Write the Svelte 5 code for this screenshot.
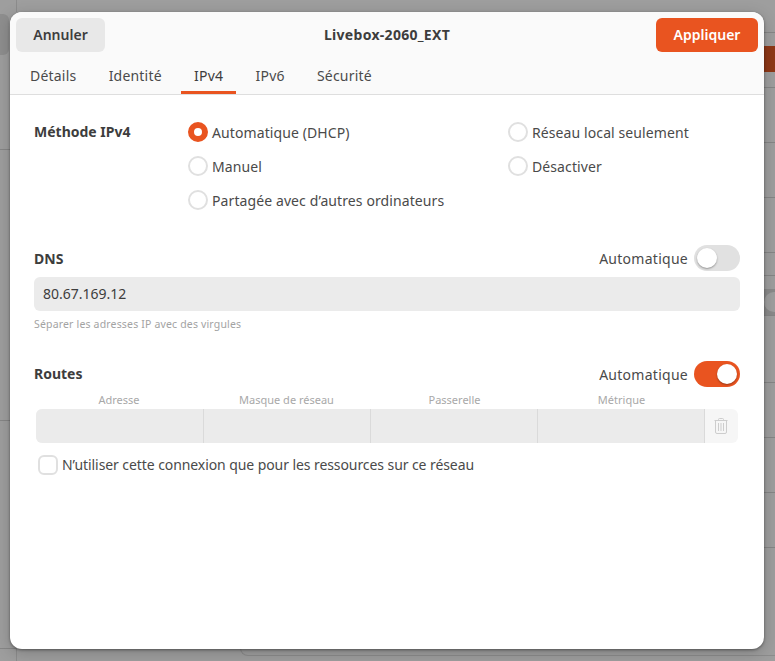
<script lang="ts">
	const columns = ['Adresse', 'Masque de réseau', 'Passerelle', 'Métrique'];
	const tabs = ['Détails', 'Identité', 'IPv4', 'IPv6', 'Sécurité'];
	// rows of the dimmed list showing at the right of the dialog
	const rightLines = [32, 87, 142, 197, 252, 275, 315, 382, 437, 492, 547, 655];
</script>

<div class="backdrop">
	<!-- window behind the dialog, dimmed -->
	<div class="behind-left"></div>
	<div class="behind-vline top-v"></div>
	<div class="behind-vline bottom-v"></div>
	<div class="behind-hline" style="top: 149px"></div>
	<div class="behind-hline" style="top: 420px"></div>
	<div class="behind-hline" style="top: 648px"></div>
	{#each rightLines as y}
		<div class="right-line" style="top: {y}px"></div>
	{/each}
	<div class="behind-btn"></div>
	<div class="behind-track"><span></span></div>
	<div class="behind-edge"></div>

	<div class="dialog">
		<header class="titlebar">
			<div class="top">
				<button class="btn cancel">Annuler</button>
				<span class="title">Livebox-2060_EXT</span>
				<button class="btn apply">Appliquer</button>
			</div>
			<nav class="tabs">
				{#each tabs as tab}
					<span class="tab" class:active={tab === 'IPv4'}>{tab}</span>
				{/each}
			</nav>
		</header>

		<main class="body">
			<section class="method">
				<span class="label method-label">Méthode IPv4</span>
				<div class="radios">
					<div class="radio-col first">
						<div class="radio"><span class="dot on"></span>Automatique (DHCP)</div>
						<div class="radio"><span class="dot"></span>Manuel</div>
						<div class="radio"><span class="dot"></span>Partagée avec d’autres ordinateurs</div>
					</div>
					<div class="radio-col">
						<div class="radio"><span class="dot"></span>Réseau local seulement</div>
						<div class="radio"><span class="dot"></span>Désactiver</div>
					</div>
				</div>
			</section>

			<section class="dns">
				<div class="head">
					<span class="label">DNS</span>
					<div class="auto">Automatique<span class="switch"><span class="knob"></span></span></div>
				</div>
				<div class="entry">80.67.169.12</div>
				<p class="hint">Séparer les adresses IP avec des virgules</p>
			</section>

			<section class="routes">
				<div class="head">
					<span class="label routes-label">Routes</span>
					<div class="auto">Automatique<span class="switch on"><span class="knob"></span></span></div>
				</div>
				<div class="grid-head">
					{#each columns as col}
						<span>{col}</span>
					{/each}
				</div>
				<div class="route-row">
					{#each columns as col}
						<div class="cell"></div>
					{/each}
					<div class="trash">
						<svg width="14" height="16" viewBox="0 0 14 16" fill="none" stroke="#cdcdcd" stroke-width="1">
							<path d="M4.5 2.5 V1.5 Q4.5 0.5 5.5 0.5 H8.5 Q9.5 0.5 9.5 1.5 V2.5" />
							<path d="M0.5 2.5 H13.5" />
							<path d="M1.5 3 V14 Q1.5 15.5 3 15.5 H11 Q12.5 15.5 12.5 14 V3" />
							<path d="M4.5 5 V13 M7 5 V13 M9.5 5 V13" />
						</svg>
					</div>
				</div>
				<div class="check"><span class="box"></span>N’utiliser cette connexion que pour les ressources sur ce réseau</div>
			</section>
		</main>
	</div>
</div>

<style>
	:global(body) {
		margin: 0;
		background: #9e9e9e;
	}
	.backdrop {
		position: relative;
		width: 775px;
		height: 661px;
		overflow: hidden;
		box-sizing: border-box;
		padding: 12px 11px 12px 10px;
		background: #9e9e9e;
		font-family: "Noto Sans", sans-serif;
		font-size: 14px;
		color: #3d3d3d;
	}
	.behind-left {
		position: absolute;
		left: 0;
		top: 14px;
		width: 9px;
		height: 41px;
		border-radius: 0 6px 6px 0;
		background: #8e8e8e;
	}
	.behind-vline {
		position: absolute;
		left: 16px;
		width: 1px;
		background: #8c8c8c;
	}
	.top-v {
		top: 0;
		height: 12px;
	}
	.bottom-v {
		bottom: 0;
		height: 13px;
	}
	.behind-hline {
		position: absolute;
		left: 0;
		width: 16px;
		height: 1px;
		background: #868686;
	}
	.right-line {
		position: absolute;
		right: 0;
		width: 11px;
		height: 1px;
		background: #868686;
	}
	.behind-btn {
		position: absolute;
		right: 0;
		top: 46px;
		width: 11px;
		height: 26px;
		background: #8f3817;
	}
	.behind-track {
		position: absolute;
		right: 0;
		top: 289px;
		width: 11px;
		height: 26px;
		background: #8a8a8a;
	}
	.behind-track span {
		display: block;
		width: 11px;
		height: 20px;
		margin-top: 3px;
		border-radius: 10px 0 0 10px;
		background: #9f9f9f;
	}
	.behind-edge {
		position: absolute;
		left: 240px;
		right: 0;
		bottom: 5px;
		height: 10px;
		border: 1px solid #8c8c8c;
		border-right: none;
		border-top: none;
		border-radius: 0 0 0 8px;
	}
	.dialog {
		position: relative;
		height: 637px;
		border-radius: 12px;
		overflow: hidden;
		background: #fff;
		box-shadow: 0 1px 3px rgba(0, 0, 0, 0.4), 0 4px 16px rgba(0, 0, 0, 0.2);
	}
	.titlebar {
		background: #fafafa;
		border-bottom: 1px solid #dedede;
	}
	.top {
		display: grid;
		grid-template-columns: 1fr auto 1fr;
		align-items: center;
		padding: 6px 6px 0;
	}
	.btn {
		height: 34px;
		border: none;
		border-radius: 6px;
		font-family: inherit;
		font-size: 14px;
		font-weight: 600;
		padding: 0 0 2px;
	}
	.cancel {
		width: 89px;
		background: #e8e8e8;
		color: #3d3d3d;
	}
	.apply {
		justify-self: end;
		width: 102px;
		background: #e95420;
		color: #fff;
	}
	.title {
		font-weight: 700;
		font-size: 14px;
		letter-spacing: 0.3px;
		padding-bottom: 2px;
	}
	.tabs {
		display: flex;
		gap: 6.3px;
		margin-top: 3px;
		padding-left: 7px;
	}
	.tab {
		display: flex;
		align-items: center;
		height: 32px;
		padding: 4px 13px 0;
		color: #4a4a4a;
		letter-spacing: 0.2px;
		border-bottom: 3px solid transparent;
	}
	.tab.active {
		color: #3d3d3d;
		border-bottom-color: #e95420;
	}
	.body {
		padding: 20px 24px 0;
	}
	.label {
		font-weight: 700;
		font-size: 14px;
	}
	.routes-label {
		padding-bottom: 2px;
	}
	.method {
		display: flex;
		align-items: flex-start;
	}
	.method-label {
		width: 154px;
		line-height: 34px;
	}
	.radios {
		flex: 1;
		display: flex;
	}
	.radio-col {
		display: flex;
		flex-direction: column;
	}
	.radio-col.first {
		width: 320px;
	}
	.radio {
		display: flex;
		align-items: center;
		gap: 4px;
		height: 34px;
		color: #4a4a4a;
		letter-spacing: 0.1px;
	}
	.dot {
		box-sizing: border-box;
		width: 20px;
		height: 20px;
		border: 2px solid #e0e0e0;
		border-radius: 50%;
		background: #fff;
	}
	.dot.on {
		border: 6px solid #e95420;
	}
	.dns {
		margin-top: 28px;
	}
	.head {
		display: flex;
		align-items: center;
		justify-content: space-between;
		height: 26px;
	}
	.auto {
		display: flex;
		align-items: center;
		gap: 6px;
		color: #4a4a4a;
		letter-spacing: 0.27px;
	}
	.switch {
		position: relative;
		display: block;
		width: 46px;
		height: 26px;
		border-radius: 13px;
		background: #e1e1e1;
	}
	.knob {
		position: absolute;
		left: 3px;
		top: 3px;
		width: 20px;
		height: 20px;
		border-radius: 50%;
		background: #fff;
		box-shadow: 0 1px 2px rgba(0, 0, 0, 0.35);
	}
	.switch.on {
		background: #e95420;
	}
	.switch.on .knob {
		left: 23px;
	}
	.entry {
		box-sizing: border-box;
		height: 34px;
		margin-top: 6px;
		padding-left: 9px;
		line-height: 33px;
		border-radius: 6px;
		background: #ebebeb;
	}
	.hint {
		margin: 6px 0 0;
		font-size: 10.5px;
		line-height: 14px;
		letter-spacing: 0.17px;
		color: #a3a3a3;
	}
	.routes {
		margin-top: 30px;
	}
	.grid-head {
		display: grid;
		grid-template-columns: 166px 169px 167px 167px;
		margin: 4px 0 0 2px;
		font-size: 11px;
		line-height: 18px;
		color: #a8a8a8;
		text-align: center;
	}
	.route-row {
		display: flex;
		height: 34px;
		margin: 0 2px;
		border-radius: 6px;
		overflow: hidden;
		background: #f6f6f6;
	}
	.cell {
		box-sizing: border-box;
		width: 167px;
		background: #ebebeb;
		border-right: 1px solid #dadada;
	}
	.cell:first-child {
		width: 168px;
	}
	.trash {
		flex: 1;
		display: flex;
		align-items: center;
		justify-content: center;
		padding-right: 2px;
	}
	.check {
		box-sizing: border-box;
		display: flex;
		align-items: center;
		gap: 4px;
		margin: 5px 0 0 4px;
		height: 34px;
		padding-bottom: 2px;
		color: #4a4a4a;
		letter-spacing: -0.08px;
	}
	.box {
		box-sizing: border-box;
		width: 20px;
		height: 20px;
		margin-top: 2px;
		border: 2px solid #e0e0e0;
		border-radius: 6px;
	}
</style>
